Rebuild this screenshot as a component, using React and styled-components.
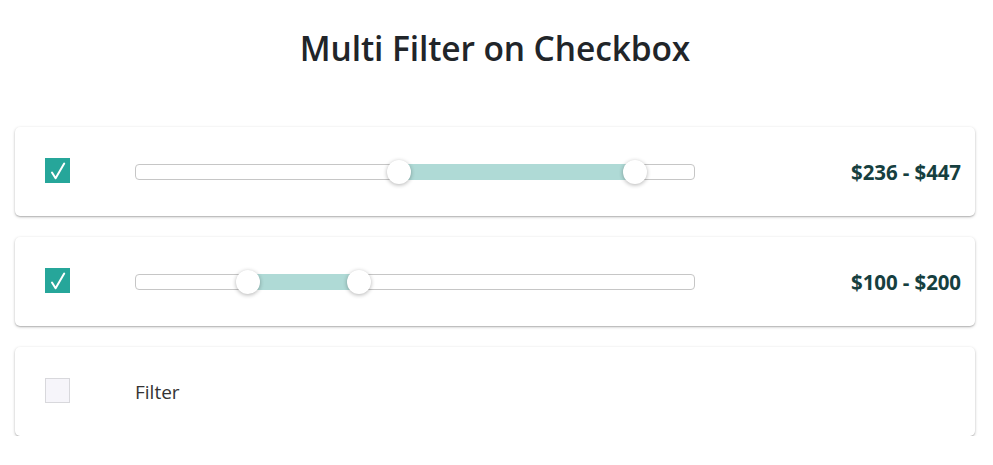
import React, { useState } from "react";
import styled, { createGlobalStyle } from "styled-components";

const Global = createGlobalStyle`
  html, body { margin: 0; padding: 0; background: #fff; }
  body { font-family: "Open Sans", "Noto Sans", sans-serif; color: #212529; }
`;

const Page = styled.div`
  padding: 0 18px 0 15px;
`;

const Title = styled.h1`
  margin: 0;
  padding-top: 25px;
  height: 127px;
  box-sizing: border-box;
  text-align: center;
  font-size: 33.5px;
  font-weight: 600;
  color: #212529;
  letter-spacing: -0.1px;
`;

const List = styled.div`
  display: flex;
  flex-direction: column;
  gap: 21px;
`;

const Card = styled.div`
  height: 89px;
  background: #fff;
  border-radius: 5px;
  box-shadow: 0 1px 3px rgba(0, 0, 0, 0.25), 0 1px 1px rgba(0, 0, 0, 0.12);
  display: flex;
  align-items: center;
  padding: 0 14px 0 30px;
  box-sizing: border-box;
`;

const Box = styled.div`
  width: 25px;
  height: 25px;
  box-sizing: border-box;
  flex: none;
  margin-top: -2px;
  background: ${(p) => (p.$on ? "#26a69a" : "#f6f5fa")};
  border: ${(p) => (p.$on ? "none" : "1px solid #d8d8dc")};
  svg {
    display: block;
  }
`;

const Content = styled.div`
  flex: 1;
  display: flex;
  align-items: center;
  margin-left: 65px;
`;

const Track = styled.div`
  position: relative;
  width: 560px;
  height: 16px;
  border: 1px solid #c6c6c6;
  border-radius: 4px;
  box-sizing: border-box;
  flex: none;
`;

const Fill = styled.div`
  position: absolute;
  top: -1px;
  bottom: -1px;
  background: #afdad6;
`;

const Thumb = styled.div`
  position: absolute;
  top: 50%;
  width: 24px;
  height: 24px;
  margin: -12px 0 0 -12px;
  border-radius: 50%;
  background: #fff;
  box-shadow: 0 1px 4px rgba(0, 0, 0, 0.3);
`;

const Value = styled.div`
  margin-left: auto;
  font-size: 20.5px;
  font-weight: 700;
  color: #163f3f;
  letter-spacing: -0.1px;
`;

const Label = styled.div`
  font-size: 19px;
  color: #333;
`;

const MIN = 10;
const MAX = 490;
const pos = (v) => 12 + ((v - MIN) / (MAX - MIN)) * 536;

function Range({ lo, hi }) {
  const a = pos(lo);
  const b = pos(hi);
  return (
    <Track>
      <Fill style={{ left: a - 1, width: b - a }} />
      <Thumb style={{ left: a - 1 }} />
      <Thumb style={{ left: b - 1 }} />
    </Track>
  );
}

function Check() {
  return (
    <svg width="25" height="25" viewBox="0 0 25 25">
      <path
        d="M7 14.5 L10.6 20.2 L19.2 5.5"
        fill="none"
        stroke="#fff"
        strokeWidth="2"
        strokeLinecap="round"
        strokeLinejoin="round"
      />
    </svg>
  );
}

export default function App() {
  const [rows] = useState([
    { on: true, lo: 236, hi: 447 },
    { on: true, lo: 100, hi: 200 },
    { on: false },
  ]);
  return (
    <Page>
      <Global />
      <Title>Multi Filter on Checkbox</Title>
      <List>
        {rows.map((r, i) => (
          <Card key={i}>
            <Box $on={r.on}>{r.on && <Check />}</Box>
            <Content>
              {r.on ? (
                <>
                  <Range lo={r.lo} hi={r.hi} />
                  <Value>
                    ${r.lo} - ${r.hi}
                  </Value>
                </>
              ) : (
                <Label>Filter</Label>
              )}
            </Content>
          </Card>
        ))}
      </List>
    </Page>
  );
}
